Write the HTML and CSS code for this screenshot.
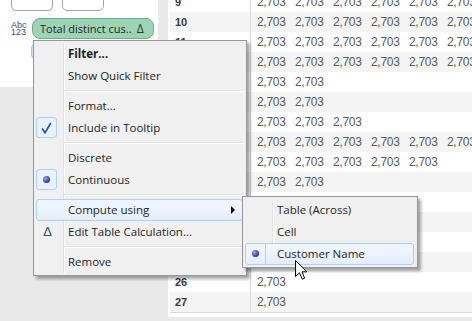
FILE: index.html
```html
<!DOCTYPE html>
<html lang="en">
<head>
  <meta charset="UTF-8" />
  <meta name="viewport" content="width=device-width, initial-scale=1.0"/>
  <title>Compute using menu</title>
  <link rel="stylesheet" href="styles.css">
</head>
<body>
  <div class="app">
    <div class="side">
      <div class="shelf">
        <div class="slots">
          <div class="slot"></div>
          <div class="slot"></div>
        </div>
        <div class="field">
          <div class="type"><span>Abc</span><span>123</span></div>
          <div class="pill"><span class="pill-text">Total distinct cus..</span><span class="delta">&Delta;</span></div>
        </div>
        <div class="pill-dim"></div>
      </div>
    </div>

    <div class="sheet">
      <div class="row"><span class="label">9</span><span class="cell">2,703</span><span class="cell">2,703</span><span class="cell">2,703</span><span class="cell">2,703</span><span class="cell">2,703</span><span class="cell">2,703</span></div>
      <div class="row"><span class="label">10</span><span class="cell">2,703</span><span class="cell">2,703</span><span class="cell">2,703</span><span class="cell">2,703</span><span class="cell">2,703</span><span class="cell">2,703</span></div>
      <div class="row"><span class="label">11</span><span class="cell">2,703</span><span class="cell">2,703</span><span class="cell">2,703</span><span class="cell">2,703</span><span class="cell">2,703</span><span class="cell">2,703</span></div>
      <div class="row"><span class="label">12</span><span class="cell">2,703</span><span class="cell">2,703</span><span class="cell">2,703</span><span class="cell">2,703</span><span class="cell">2,703</span><span class="cell">2,703</span></div>
      <div class="row"><span class="label">13</span><span class="cell">2,703</span><span class="cell">2,703</span></div>
      <div class="row"><span class="label">14</span><span class="cell">2,703</span><span class="cell">2,703</span></div>
      <div class="row"><span class="label">15</span><span class="cell">2,703</span><span class="cell">2,703</span><span class="cell">2,703</span></div>
      <div class="row"><span class="label">16</span><span class="cell">2,703</span><span class="cell">2,703</span><span class="cell">2,703</span><span class="cell">2,703</span><span class="cell">2,703</span><span class="cell">2,703</span></div>
      <div class="row"><span class="label">17</span><span class="cell">2,703</span><span class="cell">2,703</span><span class="cell">2,703</span><span class="cell">2,703</span><span class="cell">2,703</span></div>
      <div class="row"><span class="label">18</span><span class="cell">2,703</span><span class="cell">2,703</span></div>
      <div class="row"><span class="label">19</span><span class="cell">2,703</span><span class="cell">2,703</span></div>
      <div class="row"><span class="label">20</span><span class="cell">2,703</span></div>
      <div class="row"><span class="label">22</span><span class="cell">2,703</span><span class="cell">2,703</span></div>
      <div class="row"><span class="label">24</span><span class="cell">2,703</span></div>
      <div class="row"><span class="label">26</span><span class="cell">2,703</span></div>
      <div class="row"><span class="label">27</span><span class="cell">2,703</span></div>
    </div>
  </div>

  <div class="menu main-menu">
    <div class="item bold">Filter...</div>
    <div class="item">Show Quick Filter</div>
    <div class="sep"></div>
    <div class="item">Format...</div>
    <div class="item">
      <span class="icon box">
        <svg width="11" height="12" viewBox="0 0 11 12"><path d="M1.2 6.5 L4 10.8 L9.8 1" fill="none" stroke="#2649b0" stroke-width="1.6"/></svg>
      </span>Include in Tooltip
    </div>
    <div class="sep"></div>
    <div class="item">Discrete</div>
    <div class="item"><span class="icon box"><span class="dot"></span></span>Continuous</div>
    <div class="sep"></div>
    <div class="item active">Compute using<span class="arrow"></span></div>
    <div class="item"><span class="icon"><span class="tri">&Delta;</span></span>Edit Table Calculation...</div>
    <div class="sep"></div>
    <div class="item">Remove</div>
  </div>

  <div class="menu sub-menu">
    <div class="item">Table (Across)</div>
    <div class="item">Cell</div>
    <div class="item active"><span class="icon"><span class="dot"></span></span>Customer Name</div>
  </div>

  <svg class="cursor" width="13" height="21" viewBox="0 0 13 21">
    <path d="M0.5 0.5 L0.5 16.5 L4.5 12.8 L7.2 19.2 L9.6 18.2 L7 11.8 L12 11.8 Z" fill="#fff" stroke="#000" stroke-width="1"/>
  </svg>
</body>
</html>
```

FILE: styles.css
```css
body {
  margin: 0;
  width: 472px;
  height: 321px;
  overflow: hidden;
  background: #e9e9e9;
  font-family: "Open Sans", "Noto Sans", sans-serif;
  font-size: 11.5px;
  color: #1e1e1e;
}
.app {
  display: flex;
  align-items: flex-start;
  gap: 10px;
}

/* left shelf */
.side {
  width: 158px;
  flex: none;
}
.shelf {
  position: relative;
  height: 87px;
  background: #fff;
}
.slots {
  display: flex;
  gap: 9px;
  padding-left: 11px;
}
.slot {
  width: 40px;
  height: 14px;
  margin-top: -5px;
  border: 1px solid #a4a4a4;
  border-radius: 0 0 5px 5px;
  background: #fff;
}
.field {
  display: flex;
  align-items: center;
  gap: 4px;
  padding-left: 11px;
  margin-top: 7px;
}
.type {
  display: flex;
  flex-direction: column;
  font-family: "Liberation Sans", Arial, sans-serif;
  font-size: 9px;
  line-height: 7px;
  color: #3e4d72;
  width: 17px;
}
.pill {
  display: flex;
  width: 113px;
  height: 19px;
  line-height: 19px;
  padding-left: 7px;
  border: 1px solid #6bb08a;
  border-radius: 8px;
  background: #9dd4b4;
  white-space: nowrap;
  overflow: hidden;
  font-size: 11px;
}
.delta {
  margin-left: 5px;
  font-size: 12px;
  color: #333;
}
.pill-dim {
  position: absolute;
  left: 31px;
  top: 44px;
  width: 90px;
  height: 13px;
  border: 1px solid #a9c6ea;
  border-radius: 4px;
  background: #d6e4f5;
}

/* data table */
.sheet {
  flex: 1;
  margin-top: -8px;
  padding: 0 0 4px 2px;
  background: #fff;
  font-family: "Liberation Sans", Arial, sans-serif;
  white-space: nowrap;
  overflow: hidden;
}
.row {
  display: flex;
  height: 20px;
  line-height: 20px;
}
.row:nth-child(even) {
  background: #f4f4f4;
}
.row:last-child {
  border-bottom: 1px solid #dcdcdc;
}
.label {
  flex: none;
  width: 75px;
  padding-left: 5px;
  border-right: 1px solid #dadada;
  margin-right: 6px;
  font-weight: bold;
  font-size: 11px;
  color: #3a3a3a;
}
.cell {
  flex: none;
  width: 38px;
  font-size: 12px;
  letter-spacing: -0.3px;
  color: #585858;
}

/* context menus */
.menu {
  position: absolute;
  box-sizing: border-box;
  padding: 2px 3px 2px 2px;
  background: #f0f0f0;
  border: 1px solid #979797;
  box-shadow: 3px 3px 3px rgba(0, 0, 0, 0.35);
}
.menu::before {
  content: "";
  position: absolute;
  top: 2px;
  bottom: 2px;
  left: 29px;
  width: 1px;
  background: #e2e3e3;
  border-right: 1px solid #fff;
}
.main-menu {
  left: 33px;
  top: 40px;
  width: 214px;
}
.sub-menu {
  left: 242px;
  top: 196px;
  width: 176px;
}
.item {
  position: relative;
  box-sizing: border-box;
  height: 22px;
  line-height: 21px;
  padding-left: 32px;
  white-space: nowrap;
}
.item.bold {
  font-weight: bold;
}
.item.active {
  border: 1px solid #aecff7;
  border-radius: 3px;
  background: linear-gradient(#f2f7fd, #e4eefb);
  padding-left: 31px;
  line-height: 19px;
}
.sep {
  height: 8px;
  margin-left: 28px;
  position: relative;
}
.sep::after {
  content: "";
  position: absolute;
  left: 0;
  right: 0;
  top: 3px;
  height: 1px;
  background: #e0e0e0;
  border-bottom: 1px solid #fff;
}
.icon {
  position: absolute;
  left: 0;
  top: 0;
  width: 21px;
  height: 21px;
  display: flex;
  align-items: center;
  justify-content: center;
  box-sizing: border-box;
}
.active .icon {
  left: -1px;
  top: -1px;
  border-right: 1px solid #aecff7;
}
.icon.box {
  border: 1px solid #aecff7;
  border-radius: 3px;
  background: #e9f1fb;
}
.dot {
  width: 7px;
  height: 7px;
  border-radius: 50%;
  background: radial-gradient(circle at 35% 35%, #9ea6e8, #2a3196 70%);
}
.tri {
  padding-left: 2px;
  font-family: "Liberation Sans", sans-serif;
  font-size: 13px;
  color: #3b4a66;
}
.arrow {
  position: absolute;
  right: 7px;
  top: 6px;
  border-left: 4px solid #000;
  border-top: 4px solid transparent;
  border-bottom: 4px solid transparent;
}
.cursor {
  position: absolute;
  left: 295px;
  top: 260px;
}
```
